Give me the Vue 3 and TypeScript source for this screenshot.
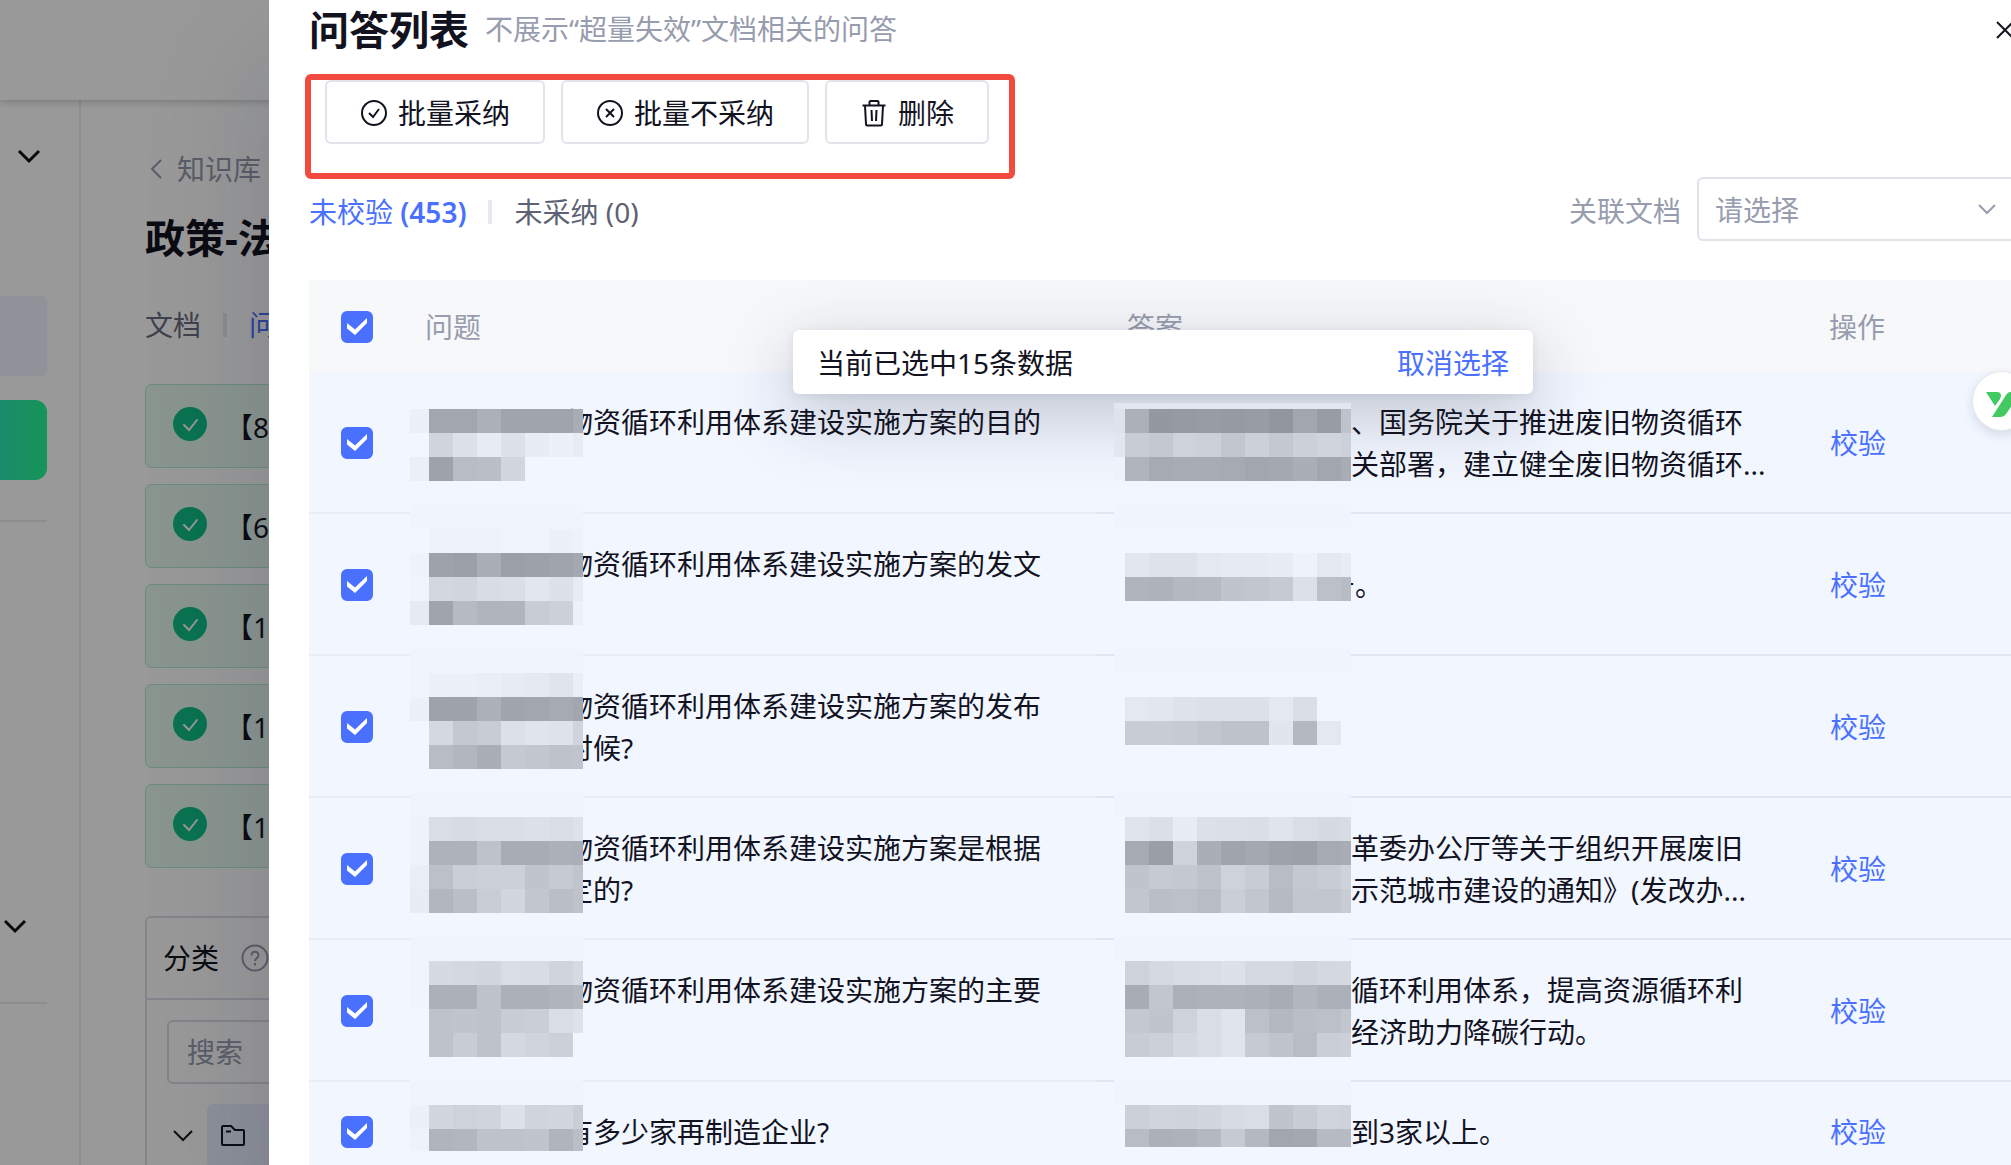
<script setup lang="ts">
import { computed, ref } from 'vue'

/** One band of a redaction mask: its height, then the lightness of each block. */
type Band = number[]

interface Mask {
  top: number
  bands: Band[]
}

interface Cell {
  lines: string[]
  tail?: boolean
  mask: Mask
}

interface Row {
  id: number
  question: Cell
  answer: Cell
}

const questionBlocks = [19, 24, 24, 24, 24, 24, 24, 10]
const answerBlocks = [11, 24, 24, 24, 24, 24, 24, 24, 24, 24, 10]

const even = (height: number, value: number, count: number): Band => [height, ...Array<number>(count).fill(value)]

const rows: Row[] = [
  {
    id: 1,
    question: {
      lines: ['物资循环利用体系建设实施方案的目的', ''],
      mask: {
        top: 37,
        bands: [
          [24, 236, 162, 162, 172, 160, 160, 160, 168],
          [24, 241, 208, 221, 231, 221, 232, 236, 231],
          [24, 235, 158, 184, 186, 210, 241, 241, 241],
        ],
      },
    },
    answer: {
      lines: ['、国务院关于推进废旧物资循环', '关部署，建立健全废旧物资循环...'],
      mask: {
        top: 31,
        bands: [
          even(6, 226, 11),
          [24, 222, 172, 148, 150, 152, 150, 152, 146, 162, 152, 190],
          [24, 226, 200, 196, 206, 204, 194, 204, 196, 204, 208, 204],
          [24, 238, 176, 166, 168, 168, 166, 162, 164, 170, 162, 168],
        ],
      },
    },
  },
  {
    id: 2,
    question: {
      lines: ['物资循环利用体系建设实施方案的发文', ''],
      mask: {
        top: -9,
        bands: [
          even(24, 240, 8),
          [24, 241, 238, 238, 238, 240, 240, 236, 238],
          [24, 238, 158, 155, 170, 155, 157, 160, 164],
          [24, 240, 211, 209, 216, 218, 226, 221, 231],
          [24, 230, 160, 182, 176, 176, 200, 204, 236],
        ],
      },
    },
    answer: {
      lines: ['号。'],
      tail: true,
      mask: {
        top: -9,
        bands: [
          even(24, 240, 11),
          even(24, 241, 11),
          [24, 241, 226, 222, 222, 228, 230, 230, 232, 238, 228, 232],
          [24, 241, 176, 174, 180, 182, 192, 194, 198, 220, 188, 184],
        ],
      },
    },
  },
  {
    id: 3,
    question: {
      lines: ['物资循环利用体系建设实施方案的发布', '时候?'],
      mask: {
        top: -7,
        bands: [
          even(24, 240, 8),
          [24, 240, 236, 236, 234, 231, 229, 224, 234],
          [24, 236, 158, 159, 172, 160, 162, 166, 162],
          [24, 241, 212, 196, 200, 220, 224, 222, 208],
          [24, 241, 184, 178, 170, 197, 194, 190, 192],
        ],
      },
    },
    answer: {
      lines: [],
      mask: {
        top: -7,
        bands: [
          even(24, 240, 11),
          even(24, 241, 11),
          [24, 241, 228, 226, 222, 220, 220, 220, 228, 218, 241, 241],
          [24, 241, 200, 200, 198, 194, 190, 190, 225, 180, 228, 241],
        ],
      },
    },
  },
  {
    id: 4,
    question: {
      lines: ['物资循环利用体系建设实施方案是根据', '定的?'],
      mask: {
        top: -5,
        bands: [
          even(24, 240, 8),
          [24, 238, 217, 215, 217, 218, 220, 217, 222],
          [24, 238, 174, 174, 190, 168, 168, 172, 170],
          [24, 234, 188, 202, 204, 204, 192, 198, 192],
          [24, 232, 178, 186, 201, 210, 194, 186, 190],
        ],
      },
    },
    answer: {
      lines: ['革委办公厅等关于组织开展废旧', '示范城市建设的通知》(发改办...'],
      mask: {
        top: -5,
        bands: [
          even(24, 240, 11),
          [24, 241, 224, 219, 232, 220, 219, 218, 224, 217, 214, 216],
          [24, 241, 166, 154, 206, 170, 160, 164, 158, 156, 166, 168],
          [24, 241, 192, 198, 196, 190, 206, 200, 184, 196, 200, 206],
          [24, 241, 194, 186, 188, 184, 202, 194, 182, 194, 194, 200],
        ],
      },
    },
  },
  {
    id: 5,
    question: {
      lines: ['物资循环利用体系建设实施方案的主要', ''],
      mask: {
        top: -3,
        bands: [
          even(24, 240, 8),
          [24, 240, 214, 212, 210, 217, 216, 208, 214],
          [24, 240, 172, 172, 190, 172, 172, 176, 180],
          [24, 241, 190, 192, 190, 200, 202, 217, 222],
          [24, 241, 190, 200, 190, 212, 208, 204, 241],
        ],
      },
    },
    answer: {
      lines: ['循环利用体系，提高资源循环利', '经济助力降碳行动。'],
      mask: {
        top: -3,
        bands: [
          even(24, 240, 11),
          [24, 241, 206, 213, 216, 217, 221, 213, 213, 208, 212, 213],
          [24, 241, 168, 194, 172, 174, 174, 172, 168, 178, 172, 172],
          [24, 241, 196, 192, 206, 217, 224, 188, 180, 186, 188, 194],
          [24, 241, 200, 204, 212, 217, 224, 198, 192, 184, 202, 204],
        ],
      },
    },
  },
  {
    id: 6,
    question: {
      lines: ['有多少家再制造企业?'],
      mask: {
        top: -25,
        bands: [
          even(24, 241, 8),
          even(24, 240, 8),
          [24, 236, 210, 206, 208, 221, 208, 210, 202],
          [22, 238, 176, 178, 190, 190, 192, 176, 186],
        ],
      },
    },
    answer: {
      lines: ['到3家以上。'],
      mask: {
        top: -25,
        bands: [
          even(24, 241, 11),
          even(24, 240, 11),
          [24, 241, 204, 208, 207, 210, 215, 217, 192, 200, 208, 206],
          [18, 241, 184, 172, 174, 180, 198, 180, 162, 164, 182, 182],
        ],
      },
    },
  },
]

interface Block {
  x: number
  y: number
  w: number
  h: number
  fill: string
}

function blocksOf(mask: Mask, widths: number[]): Block[] {
  const out: Block[] = []
  let y = 0
  for (const [h, ...values] of mask.bands) {
    let x = 0
    values.forEach((v, i) => {
      const fill = v === 241 ? '#f1f6ff' : `rgb(${v},${v + 4},${v + 13})`
      out.push({ x, y, w: widths[i], h, fill })
      x += widths[i]
    })
    y += h
  }
  return out
}

const heightOf = (mask: Mask): number => mask.bands.reduce((sum, band) => sum + band[0], 0)

const tableRows = rows.map((row) => ({
  ...row,
  columns: [
    { key: 'question', cell: row.question, width: 173, blocks: blocksOf(row.question.mask, questionBlocks) },
    { key: 'answer', cell: row.answer, width: 237, blocks: blocksOf(row.answer.mask, answerBlocks) },
  ],
}))

const selected = ref<number[]>(rows.map((row) => row.id))
const allSelected = computed({
  get: () => selected.value.length === rows.length,
  set: (on: boolean) => {
    selected.value = on ? rows.map((row) => row.id) : []
  },
})

const linkedDoc = ref('')
const keyword = ref('')
const cards = ['【8', '【6', '【1', '【1', '【1']
</script>

<template>
  <div class="app">
    <div class="page">
      <header class="topbar"></header>
      <div class="body">
        <aside class="sidebar">
          <svg class="fold first" width="24" height="16" viewBox="0 0 24 16"><path d="M2 3l10 10L22 3" /></svg>
          <div class="side-item"></div>
          <div class="side-item active"></div>
          <div class="side-line"></div>
          <svg class="fold second" width="24" height="16" viewBox="0 0 24 16"><path d="M2 3l10 10L22 3" /></svg>
          <div class="side-line last"></div>
        </aside>
        <main class="main">
          <a class="back" href="#">
            <svg width="16" height="24" viewBox="0 0 16 24"><path d="M12 3L3 12l9 9" /></svg>知识库
          </a>
          <h1>政策-法规</h1>
          <nav class="main-tabs">
            <a href="#">文档</a><i></i><a class="on" href="#">问答</a>
          </nav>
          <ul class="cards">
            <li v-for="(card, i) in cards" :key="i">
              <svg width="34" height="34" viewBox="0 0 34 34">
                <circle cx="17" cy="17" r="17" fill="#11c085" />
                <path d="M11 18l5 5 8-10" fill="none" stroke="#fff" stroke-width="2" stroke-linecap="round" />
              </svg>
              <span>{{ card }}</span>
            </li>
          </ul>
          <section class="tree">
            <div class="tree-head">
              分类
              <svg width="28" height="28" viewBox="0 0 28 28" fill="none" stroke="#979cae" stroke-width="2">
                <circle cx="14" cy="14" r="12.500" />
                <path d="M10.500 11.500c0-5 7-5 7 0 0 2.500-3.500 2.500-3.500 5.500" />
                <path d="M14 19v2.500" />
              </svg>
            </div>
            <input v-model="keyword" class="search" type="text" placeholder="搜索" aria-label="搜索" />
            <div class="node">
              <svg width="24" height="16" viewBox="0 0 24 16" fill="none" stroke="#15151f" stroke-width="2">
                <path d="M3 3l9 9 9-9" />
              </svg>
              <div class="node-label">
                <svg width="26" height="24" viewBox="0 0 26 24" fill="none" stroke="#15151f" stroke-width="2">
                  <path d="M3 2h8l4 4h8q1 0 1 1v13q0 1-1 1H3q-1 0-1-1V3q0-1 1-1zM6 7.500h5" />
                </svg>
              </div>
            </div>
          </section>
        </main>
      </div>
    </div>

    <div class="scrim"></div>

    <section class="drawer" role="dialog" aria-label="问答列表">
      <div class="drawer-head">
        <h2>问答列表</h2>
        <p>不展示“超量失效”文档相关的问答</p>
        <button class="close" type="button" aria-label="关闭">
          <svg width="22" height="22" viewBox="0 0 22 22"><path d="M2 3l16 16M18 3L2 19" /></svg>
        </button>
      </div>

      <div class="batch">
        <button type="button">
          <svg width="28" height="28" viewBox="0 0 28 28">
            <circle cx="14" cy="14" r="12" />
            <path d="M9 14l4 4 6-8" />
          </svg>
          批量采纳
        </button>
        <button type="button">
          <svg width="28" height="28" viewBox="0 0 28 28">
            <circle cx="14" cy="14" r="12" />
            <path d="M10 10l8 8M18 10l-8 8" />
          </svg>
          批量不采纳
        </button>
        <button type="button">
          <svg width="28" height="28" viewBox="0 0 28 28">
            <path d="M2.500 6.500h23M9.500 6V3q0-1 1-1h7q1 0 1 1v3M5 7l1 18q0 1.500 1.500 1.500h13q1.500 0 1.500-1.500l1-18M11.500 11l.5 11M16.500 11l-.5 11" />
          </svg>
          删除
        </button>
      </div>

      <div class="filters">
        <div class="tabs">
          <button class="on" type="button">未校验 <b>(453)</b></button>
          <i></i>
          <button type="button">未采纳 (0)</button>
        </div>
        <label for="linked-doc">关联文档</label>
        <div class="select">
          <select id="linked-doc" v-model="linkedDoc">
            <option value="">请选择</option>
          </select>
          <svg width="20" height="14" viewBox="0 0 20 14"><path d="M2 2l8 8 8-8" /></svg>
        </div>
      </div>

      <table>
        <colgroup>
          <col class="c-check" />
          <col />
          <col />
          <col class="c-op" />
        </colgroup>
        <thead>
          <tr>
            <th>
              <span class="check">
                <input v-model="allSelected" type="checkbox" aria-label="全选" />
                <svg viewBox="0 0 32 32"><path d="M6 12l8 6.500L26 7v5L14 24l-8-6.500z" /></svg>
              </span>
            </th>
            <th>问题</th>
            <th>答案</th>
            <th>操作</th>
          </tr>
        </thead>
        <tbody>
          <tr v-for="row in tableRows" :key="row.id">
            <td class="soft">
              <span class="check">
                <input v-model="selected" type="checkbox" :value="row.id" :aria-label="`选择第${row.id}条`" />
                <svg viewBox="0 0 32 32"><path d="M6 12l8 6.500L26 7v5L14 24l-8-6.500z" /></svg>
              </span>
            </td>
            <td v-for="col in row.columns" :key="col.key" :class="[col.key, { soft: col.key === 'question' }]">
              <div class="text" :class="{ tail: col.cell.tail }">
                <span v-for="(line, i) in col.cell.lines" :key="i">{{ line }}</span>
              </div>
              <svg
                class="mask"
                :width="col.width"
                :height="heightOf(col.cell.mask)"
                :style="{ top: col.cell.mask.top + 'px' }"
                shape-rendering="crispEdges"
                aria-hidden="true"
              >
                <rect
                  v-for="(b, i) in col.blocks"
                  :key="i"
                  :x="b.x"
                  :y="b.y"
                  :width="b.w"
                  :height="b.h"
                  :fill="b.fill"
                />
              </svg>
            </td>
            <td><a class="verify" href="#">校验</a></td>
          </tr>
        </tbody>
      </table>

      <div class="toast" role="status">
        <span>当前已选中15条数据</span>
        <button type="button" @click="selected = []">取消选择</button>
      </div>
    </section>

    <button class="float" type="button" aria-label="助手">
      <svg width="58" height="58" viewBox="0 0 58 58" fill="#43c961">
        <path d="M13 20h11q4 0 4 4l-1 3-5 7z" />
        <path d="M37 20h11L33 42q-2 3-5 3h-9l14-22q2-3 4-3z" />
      </svg>
    </button>
  </div>
</template>

<style>
body {
  margin: 0;
}
</style>

<style scoped>
.app {
  position: relative;
  height: 100vh;
  overflow: hidden;
  background: #fff;
  color: #13131f;
  font-family: "Noto Sans", "Noto Sans CJK SC", sans-serif;
  font-size: 28px;
  line-height: 42px;
}
.app * {
  box-sizing: border-box;
}
button,
select,
input {
  font: inherit;
  color: inherit;
  margin: 0;
}
button {
  padding: 0;
  border: 0;
  background: none;
}
a {
  color: inherit;
  text-decoration: none;
}
svg {
  display: block;
  flex: none;
}

/* page under the drawer */
.page {
  display: flex;
  flex-direction: column;
  height: 100%;
}
.topbar {
  position: relative;
  flex: none;
  height: 100px;
  box-shadow: 0 1px 8px rgba(0, 0, 0, 0.25);
}
.body {
  display: flex;
  flex: 1;
  min-height: 0;
}
.sidebar {
  display: flex;
  flex-direction: column;
  flex: none;
  width: 81px;
  padding-right: 32px;
  border-right: 2px solid #eee;
}
.fold {
  fill: none;
  stroke: #111;
  stroke-width: 3;
  align-self: flex-end;
}
.fold.first {
  margin: 48px 6px 132px 0;
}
.side-item {
  height: 80px;
  margin-bottom: 24px;
  border-radius: 0 6px 6px 0;
  background: #eff6ff;
}
.side-item.active {
  margin-bottom: 40px;
  border-radius: 0 12px 12px 0;
  background: linear-gradient(90deg, #2ee8b2, #25f896);
}
.side-line {
  height: 2px;
  background: #ececec;
}
.fold.second {
  margin: 396px 20px 68px 0;
}
.main {
  flex: 1;
  min-width: 0;
  padding: 48px 0 0 64px;
}
.back {
  display: flex;
  align-items: center;
  gap: 12px;
  padding-left: 4px;
  color: #979cae;
}
.back svg {
  fill: none;
  stroke: #979cae;
  stroke-width: 2;
}
h1 {
  margin: 20px 0 38px;
  font-size: 40px;
  line-height: 56px;
}
.main-tabs {
  display: flex;
  align-items: center;
  gap: 22px;
  margin: 0 0 38px;
  color: #6a6e80;
}
.main-tabs i,
.tabs i {
  width: 4px;
  height: 24px;
  background: #e8e9f0;
}
.main-tabs .on {
  color: #4a70ff;
}
.cards {
  display: flex;
  flex-direction: column;
  gap: 16px;
  margin: 0 0 48px;
  padding: 0;
  list-style: none;
}
.cards li {
  display: flex;
  align-items: flex-start;
  gap: 18px;
  height: 84px;
  padding: 22px 27px;
  border: 1px solid #b5ecd0;
  border-radius: 6px;
  background: #e6f8ee;
}
.cards span {
  line-height: 40px;
}
.tree {
  height: 400px;
  border: 2px solid #dcdde8;
  border-radius: 6px;
}
.tree-head {
  display: flex;
  align-items: center;
  gap: 22px;
  height: 82px;
  padding-left: 16px;
  border-bottom: 2px solid #dcdde8;
}
.search {
  display: block;
  width: 400px;
  height: 64px;
  margin: 20px;
  padding: 0 18px;
  border: 2px solid #dcdde8;
  border-radius: 6px;
  background: #fff;
}
.search::placeholder {
  color: #979cae;
  opacity: 1;
}
.node {
  display: flex;
  align-items: center;
  gap: 12px;
  padding-left: 24px;
}
.node-label {
  display: flex;
  align-items: center;
  flex: 1;
  height: 64px;
  padding-left: 13px;
  border-radius: 6px;
  background: #eaf0ff;
}
.scrim {
  position: absolute;
  inset: 0;
  background: rgba(0, 0, 0, 0.4);
}

/* drawer */
.drawer {
  position: absolute;
  top: 0;
  left: 269px;
  width: calc(100% - 223px);
  min-height: 100%;
  padding: 0 40px;
  background: #fff;
  box-shadow: 0 64px 120px rgba(20, 24, 60, 0.16);
}
.drawer-head {
  display: flex;
  align-items: center;
  gap: 16px;
  height: 60px;
}
h2 {
  margin: 0;
  font-size: 40px;
  line-height: 56px;
}
.drawer-head p {
  flex: 1;
  margin: 0;
  padding-bottom: 2px;
  color: #979cae;
}
.close svg {
  fill: none;
  stroke: #15151f;
  stroke-width: 2;
}
.batch {
  display: flex;
  gap: 16px;
  width: fit-content;
  margin: 14px 0 0 -4px;
  padding: 0 20px 29px 14px;
  border: 6px solid #f24a3f;
  border-radius: 6px;
}
.batch button {
  display: flex;
  align-items: center;
  gap: 10px;
  height: 64px;
  padding: 2px 33px 0;
  border: 2px solid #e3e4eb;
  border-radius: 6px;
  background: #fff;
}
.batch svg {
  fill: none;
  stroke: #13131f;
  stroke-width: 2;
}
.filters {
  display: flex;
  align-items: center;
  height: 64px;
  margin: -2px 0 39px;
}
.tabs {
  display: flex;
  align-items: center;
  gap: 22px;
  flex: 1;
  padding-top: 6px;
  color: #5c6273;
}
.tabs .on {
  color: #4a70ff;
}
.tabs b {
  font-weight: 600;
}
.filters label {
  margin-right: 16px;
  padding-top: 3px;
  color: #979cae;
}
.select {
  position: relative;
  width: 320px;
}
.select select {
  display: block;
  width: 100%;
  height: 64px;
  padding: 2px 16px 0;
  border: 2px solid #e0e1e9;
  border-radius: 6px;
  background: #fff;
  color: #979cae;
  appearance: none;
}
.select svg {
  position: absolute;
  right: 20px;
  top: 26px;
  fill: none;
  stroke: #979cae;
  stroke-width: 2;
  pointer-events: none;
}

table {
  width: 100%;
  border-collapse: separate;
  border-spacing: 0;
  table-layout: fixed;
}
.c-check {
  width: 84px;
}
.c-op {
  width: 220px;
}
th {
  height: 92px;
  padding: 2px 32px 0;
  background: #f7f8fa;
  color: #979cae;
  font-weight: 400;
  text-align: left;
}
td {
  position: relative;
  padding: 29px 32px 27px;
  border-bottom: 2px solid #e1e5f1;
  background: #f1f6ff;
  vertical-align: middle;
  white-space: nowrap;
}
td.soft {
  border-color: #ecedf2;
}
th:first-child,
td:first-child {
  padding-right: 0;
}
.check {
  display: grid;
  width: 32px;
  height: 32px;
}
.check input,
.check svg {
  grid-area: 1 / 1;
  width: 32px;
  height: 32px;
}
.check input {
  border: 2px solid #d5d8e4;
  border-radius: 6px;
  background: #fff;
  appearance: none;
}
.check input:checked {
  border-color: #4a70ff;
  background: #4a70ff;
}
.check svg {
  fill: #fff;
  pointer-events: none;
}
.text span {
  display: block;
  min-height: 42px;
}
.question .text {
  padding-left: 140px;
}
.answer .text {
  padding-left: 224px;
}
.answer .tail {
  padding-left: 200px;
}
.mask {
  position: absolute;
  z-index: 3;
  left: 17px;
}
.answer .mask {
  left: 19px;
}
.verify {
  padding-left: 1px;
  color: #4a70ff;
}
.toast {
  position: absolute;
  z-index: 2;
  top: 330px;
  left: 50%;
  display: flex;
  align-items: center;
  justify-content: space-between;
  width: 740px;
  height: 64px;
  margin-left: -370px;
  padding: 2px 24px 0;
  border-radius: 6px;
  background: #fff;
  box-shadow: 0 20px 70px rgba(30, 34, 60, 0.25), 0 2px 8px rgba(30, 34, 60, 0.08);
}
.toast button {
  color: #4a70ff;
}
.float {
  position: absolute;
  top: 372px;
  right: -20px;
  width: 58px;
  height: 58px;
  border-radius: 50%;
  background: #fff;
  box-shadow: 0 0 0 1px #e6e8ee, 0 4px 12px rgba(30, 34, 60, 0.15);
}
</style>
